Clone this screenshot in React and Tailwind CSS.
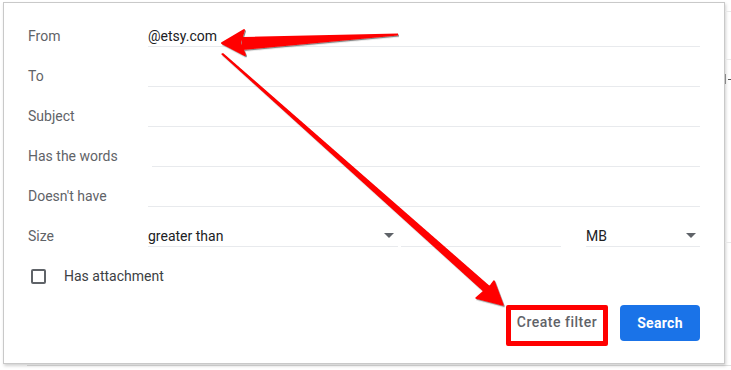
import React from 'react';

const font = { fontFamily: 'Roboto, "Liberation Sans", sans-serif' };

const Field = ({ label, value, indent }) => (
    <div className="flex items-center h-[40px]">
        <div className="w-[120px] shrink-0 text-[14px] text-[#5f6368]">{label}</div>
        <div className={`flex-1 h-[21px] border-b border-[#e8eaed] text-[14px] leading-[20px] text-[#202124] ${indent ? 'ml-[4px]' : ''}`}>
            {value}
        </div>
    </div>
);

const Caret = () => (
    <svg width="10" height="5" viewBox="0 0 10 5" className="shrink-0">
        <path d="M0 0 L10 0 L5 5 Z" fill="#5f6368" />
    </svg>
);

const Annotations = () => (
    <svg width="731" height="370" viewBox="0 0 731 370" className="absolute left-0 top-0 pointer-events-none">
        <defs>
            <filter id="sh" x="-10%" y="-10%" width="120%" height="120%">
                <feDropShadow dx="1" dy="1.2" stdDeviation="0.6" floodColor="#333" floodOpacity="0.6" />
            </filter>
        </defs>
        <g fill="#ff0000" filter="url(#sh)" strokeLinejoin="round">
            {/* arrow pointing at the From value */}
            <polygon points="398,33.5 398,35.5 242,50 242,37" />
            <polygon points="222,43 244,30 240,43 245,55" stroke="#ff0000" strokeWidth="2" />
            {/* long arrow down to Create filter */}
            <polygon points="221,54 223,53 492,288 486,294" />
            <polygon points="503,305 476,298 484,291 491,285 494,281" stroke="#ff0000" strokeWidth="1.5" />
        </g>
    </svg>
);

const App = () => {
    return (
        <div className="relative w-[731px] h-[370px] bg-white overflow-hidden" style={font}>
            <div className="flex">
                <div className="mt-[2px] ml-[3px] w-[722px] h-[362px] bg-white border border-[#c9c9c9] shadow-[1px_2px_3px_rgba(0,0,0,0.18)] pt-[13px] pl-[24px] pr-[24px] flex flex-col">
                    <Field label="From" value="@etsy.com" />
                    <Field label="To" />
                    <Field label="Subject" />
                    <Field label="Has the words" indent />
                    <Field label="Doesn't have" />
                    <div className="flex items-center h-[40px]">
                        <div className="w-[120px] shrink-0 text-[14px] text-[#5f6368]">Size</div>
                        <div className="w-[250px] h-[21px] border-b border-[#e8eaed] flex items-center justify-between pr-[4px] text-[14px] leading-[20px] text-[#202124]">
                            <span>greater than</span>
                            <Caret />
                        </div>
                        <div className="w-[160px] ml-[3px] h-[21px] border-b border-[#e8eaed]"></div>
                        <div className="flex-1 ml-[25px] h-[21px] border-b border-[#e8eaed] flex items-center justify-between pr-[4px] text-[14px] leading-[20px] text-[#202124]">
                            <span>MB</span>
                            <Caret />
                        </div>
                    </div>
                    <div className="flex items-center h-[40px]">
                        <div className="ml-[3px] w-[15px] h-[15px] border-2 border-[#5f6368] rounded-[2px]"></div>
                        <span className="ml-[18px] text-[14px] text-[#3c4043]">Has attachment</span>
                    </div>
                    <div className="flex justify-end items-start mt-[9px] gap-[12px]">
                        <button className="w-[102px] h-[41px] border-[5px] border-[#ff0000] rounded-[2px] bg-white text-[14px] font-medium tracking-[0.5px] text-[#5f6368] flex items-center justify-center pb-[6px]">
                            Create filter
                        </button>
                        <button className="w-[80px] h-[36px] rounded-[4px] bg-[#1a73e8] text-white text-[14px] font-bold tracking-[0.3px] flex items-center justify-center">
                            Search
                        </button>
                    </div>
                </div>
                <div className="flex-1 flex flex-col">
                    <div className="mt-[11px] border-t border-[#e8e8e8]"></div>
                    <div className="mt-[47px] border-t border-[#e8e8e8]"></div>
                    <div className="mt-[14px] flex items-center">
                        <div className="w-[1px] h-[10px] bg-[#888]"></div>
                        <div className="ml-[2px] w-[3px] h-[1px] bg-[#555]"></div>
                    </div>
                    <div className="mt-[158px] border-t border-[#e8e8e8]"></div>
                </div>
            </div>
            <div className="ml-[27px] mt-[1px] border-t border-[#e0e0e0]"></div>
            <Annotations />
        </div>
    );
};

export default App;
